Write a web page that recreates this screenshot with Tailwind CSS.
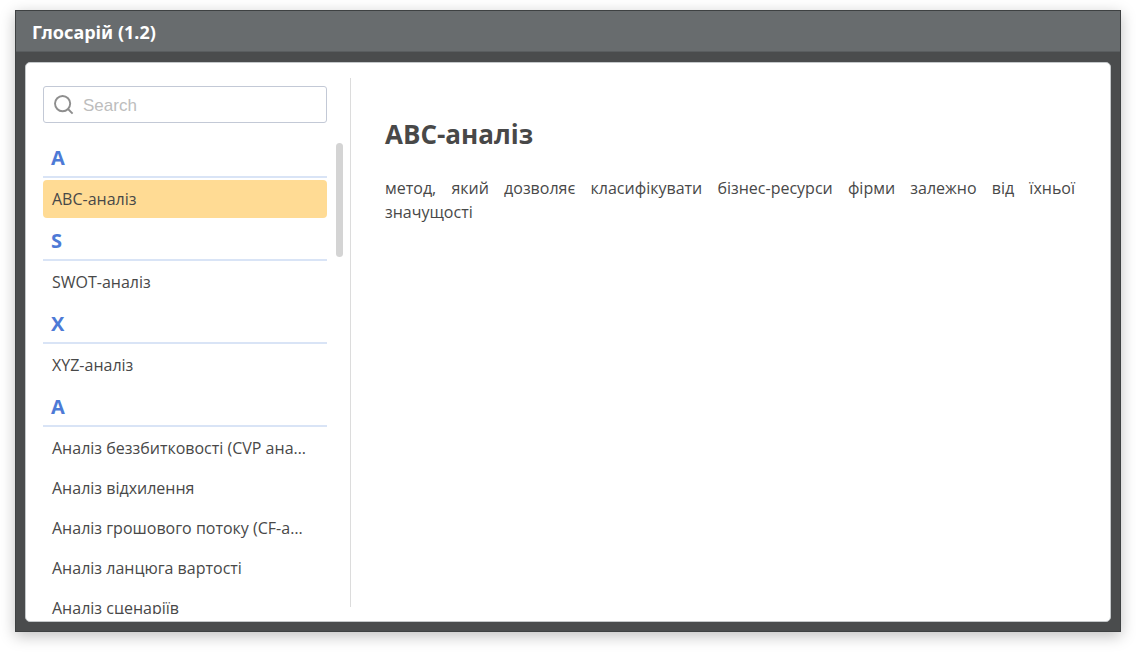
<!DOCTYPE html>
<html lang="uk">
<head>
<meta charset="utf-8">
<meta name="viewport" content="width=device-width, initial-scale=1">
<title>Глосарій (1.2)</title>
<script src="https://cdn.jsdelivr.net/npm/@tailwindcss/browser@4"></script>
</head>
<body class="flex h-screen flex-col overflow-hidden bg-white px-[15px] pt-[10px] pb-[21px] font-['Open_Sans','Noto_Sans',sans-serif] text-[#484848]">
<main class="flex min-h-0 flex-1 flex-col border border-[#3e4142] bg-[#4a4c4d] shadow-[0_4px_14px_rgba(0,0,0,0.25)]">
  <header class="flex h-[41px] shrink-0 items-center border-b border-[#5a5e60] bg-[#686c6e] px-4 pt-px">
    <h1 class="font-['Noto_Sans',sans-serif] text-lg leading-6 font-bold text-white">Глосарій (1.2)</h1>
  </header>
  <div class="flex min-h-0 flex-1 p-[9px] pt-[10px]">
    <section class="flex min-h-0 flex-1 rounded-[5px] border border-[#c4c8ca] bg-white">
      <nav aria-label="Терміни" class="flex w-[324px] shrink-0 flex-col pt-[23px] pb-[7px] pl-[17px]">
        <label class="mr-[23px] flex h-[37px] shrink-0 items-center gap-[9px] rounded-[3px] border border-[#c3c9d6] px-[10px]">
          <svg class="size-5 shrink-0" viewBox="0 0 20 20" fill="none" stroke="#8e8e8e" stroke-width="1.9" aria-hidden="true"><circle cx="8.6" cy="8.6" r="7.6"/><path d="M14 14 18.6 18.6"/></svg>
          <input type="text" aria-label="Search" placeholder="Search" class="w-full min-w-0 bg-transparent pt-[2px] font-['Liberation_Sans',Arial,sans-serif] text-[17px] outline-none placeholder:text-[#bdbdbd]">
        </label>
        <div class="relative mt-3 min-h-0 flex-1 overflow-hidden pr-[23px]">
          <div class="absolute top-2 right-[7px] h-[114px] w-[7px] rounded-full bg-[#d4d4d4]"></div>
          <h2 class="flex h-[43px] items-end border-b-2 border-[#d9e4f6] px-2 pb-1 text-xl leading-7 font-bold text-[#4d7ad6]">A</h2>
          <button class="mt-[2px] block h-[38px] w-full truncate rounded-[4px] bg-[#ffdb94] pr-4 pl-[9px] text-left text-base">ABC-аналіз</button>
          <h2 class="flex h-[43px] items-end border-b-2 border-[#d9e4f6] px-2 pb-1 text-xl leading-7 font-bold text-[#4d7ad6]">S</h2>
          <button class="mt-[2px] block h-[38px] w-full truncate rounded-[4px] pr-4 pl-[9px] text-left text-base">SWOT-аналіз</button>
          <h2 class="flex h-[43px] items-end border-b-2 border-[#d9e4f6] px-2 pb-1 text-xl leading-7 font-bold text-[#4d7ad6]">X</h2>
          <button class="mt-[2px] block h-[38px] w-full truncate rounded-[4px] pr-4 pl-[9px] text-left text-base">XYZ-аналіз</button>
          <h2 class="flex h-[43px] items-end border-b-2 border-[#d9e4f6] px-2 pb-1 text-xl leading-7 font-bold text-[#4d7ad6]">А</h2>
          <button class="mt-[2px] block h-[38px] w-full truncate rounded-[4px] pr-4 pl-[9px] text-left text-base">Аналіз беззбитковості (CVP аналіз)</button>
          <button class="mt-[2px] block h-[38px] w-full truncate rounded-[4px] pr-4 pl-[9px] text-left text-base">Аналіз відхилення</button>
          <button class="mt-[2px] block h-[38px] w-full truncate rounded-[4px] pr-4 pl-[9px] text-left text-base">Аналіз грошового потоку (CF-аналіз)</button>
          <button class="mt-[2px] block h-[38px] w-full truncate rounded-[4px] pr-4 pl-[9px] text-left text-base">Аналіз ланцюга вартості</button>
          <button class="mt-[2px] block h-[38px] w-full truncate rounded-[4px] pr-4 pl-[9px] text-left text-base">Аналіз сценаріїв</button>
        </div>
      </nav>
      <article class="mt-[15px] mb-[14px] flex-1 border-l border-[#dcdcdc] pt-[38px] pr-[35px] pl-[34px]">
        <h2 class="text-[26px] leading-9 font-bold">ABC-аналіз</h2>
        <p class="mt-6 text-justify text-base leading-6">метод, який дозволяє класифікувати бізнес-ресурси фірми залежно від їхньої значущості</p>
      </article>
    </section>
  </div>
</main>
</body>
</html>
